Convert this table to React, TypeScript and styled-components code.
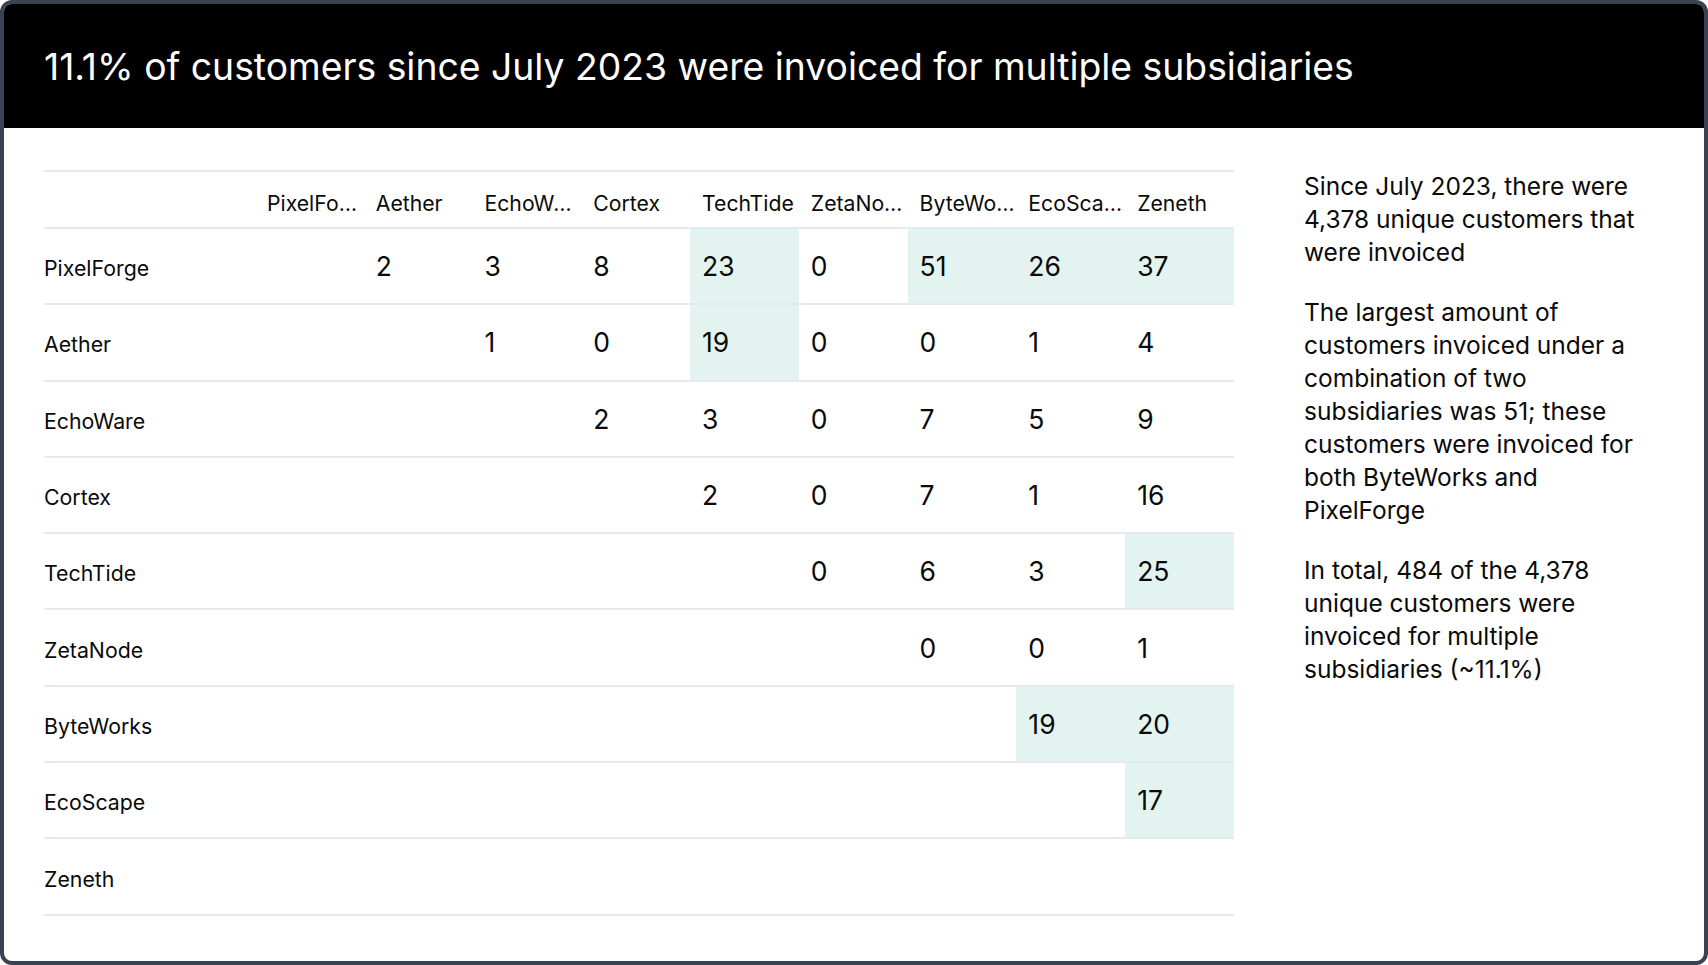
import React from 'react'
import styled, { createGlobalStyle } from 'styled-components'

const GlobalStyle = createGlobalStyle`
    html, body {
        margin: 0;
        padding: 0;
        height: 100%;
        background: #ffffff;
    }
    #root {
        height: 100%;
    }
    * {
        box-sizing: border-box;
    }
`

const companies = [
    'PixelForge',
    'Aether',
    'EchoWare',
    'Cortex',
    'TechTide',
    'ZetaNode',
    'ByteWorks',
    'EcoScape',
    'Zeneth',
]

// upper triangle only, null = empty cell
const matrix: (number | null)[][] = [
    [null, 2, 3, 8, 23, 0, 51, 26, 37],
    [null, null, 1, 0, 19, 0, 0, 1, 4],
    [null, null, null, 2, 3, 0, 7, 5, 9],
    [null, null, null, null, 2, 0, 7, 1, 16],
    [null, null, null, null, null, 0, 6, 3, 25],
    [null, null, null, null, null, null, 0, 0, 1],
    [null, null, null, null, null, null, null, 19, 20],
    [null, null, null, null, null, null, null, null, 17],
    [null, null, null, null, null, null, null, null, null],
]

const HIGHLIGHT_FROM = 17

function App() {
    return (
        <>
            <GlobalStyle />
            <Frame>
                {/* Header */}
                <Header>
                    <Title>11.1% of customers since July 2023 were invoiced for multiple subsidiaries</Title>
                </Header>

                {/* Body */}
                <Body>
                    <Matrix>
                        <colgroup>
                            <LabelCol />
                            {companies.map((c) => (
                                <ValueCol key={c} />
                            ))}
                        </colgroup>
                        <thead>
                            <tr>
                                <HeadCell />
                                {companies.map((c) => (
                                    <HeadCell key={c}>{c}</HeadCell>
                                ))}
                            </tr>
                        </thead>
                        <tbody>
                            {companies.map((row, i) => (
                                <tr key={row}>
                                    <RowLabel>{row}</RowLabel>
                                    {matrix[i].map((v, j) => (
                                        <ValueCell key={j} $hot={v !== null && v >= HIGHLIGHT_FROM}>
                                            {v}
                                        </ValueCell>
                                    ))}
                                </tr>
                            ))}
                        </tbody>
                    </Matrix>

                    <Notes>
                        <p>Since July 2023, there were 4,378 unique customers that were invoiced</p>
                        <p>
                            The largest amount of customers invoiced under a combination of two subsidiaries
                            was 51; these customers were invoiced for both ByteWorks and PixelForge
                        </p>
                        <p>In total, 484 of the 4,378 unique customers were invoiced for multiple subsidiaries (~11.1%)</p>
                    </Notes>
                </Body>
            </Frame>
        </>
    )
}

export default App

const Frame = styled.div`
    height: 100vh;
    border: 4px solid #3a4150;
    border-radius: 12px;
    overflow: hidden;
    display: flex;
    flex-direction: column;
    font-family: Inter, 'Noto Sans', sans-serif;
    color: #0a0a0a;
    background: #ffffff;
`

const Header = styled.header`
    height: 124px;
    flex-shrink: 0;
    background: #000000;
    display: flex;
    align-items: center;
    padding: 0 40px;
`

const Title = styled.h1`
    margin: 0;
    color: #ffffff;
    font-size: 37.3px;
    font-weight: 400;
`

const Body = styled.main`
    display: grid;
    grid-template-columns: 1fr 360px;
    column-gap: 70px;
    align-items: start;
    padding: 42px 40px 0 40px;
`

const Matrix = styled.table`
    width: 100%;
    table-layout: fixed;
    border-collapse: collapse;
    border-top: 2px solid #e5e9f0;
`

const LabelCol = styled.col`
    width: 211px;
`

const ValueCol = styled.col`
    width: auto;
`

const HeadCell = styled.th`
    height: 57px;
    padding: 6px 0 0 12px;
    text-align: left;
    font-weight: 400;
    font-size: 21.2px;
    white-space: nowrap;
    overflow: hidden;
    text-overflow: ellipsis;
    border-bottom: 2px solid #e5e9f0;

    &:first-child {
        padding-left: 0;
    }
`

const RowLabel = styled.td`
    height: 76.3px;
    padding: 4px 0 0 0;
    font-size: 21.3px;
    white-space: nowrap;
    border-bottom: 2px solid #e5e9f0;
`

const ValueCell = styled.td<{ $hot: boolean }>`
    height: 76.3px;
    padding: 0 4px 0 12px;
    font-size: 26.5px;
    background: ${(p) => (p.$hot ? '#e3f3ef' : 'transparent')};
    border-bottom: 2px solid #e5e9f0;
`

const Notes = styled.aside`
    font-size: 24.5px;
    line-height: 33px;

    p {
        margin: 0 0 27px 0;
    }
`
